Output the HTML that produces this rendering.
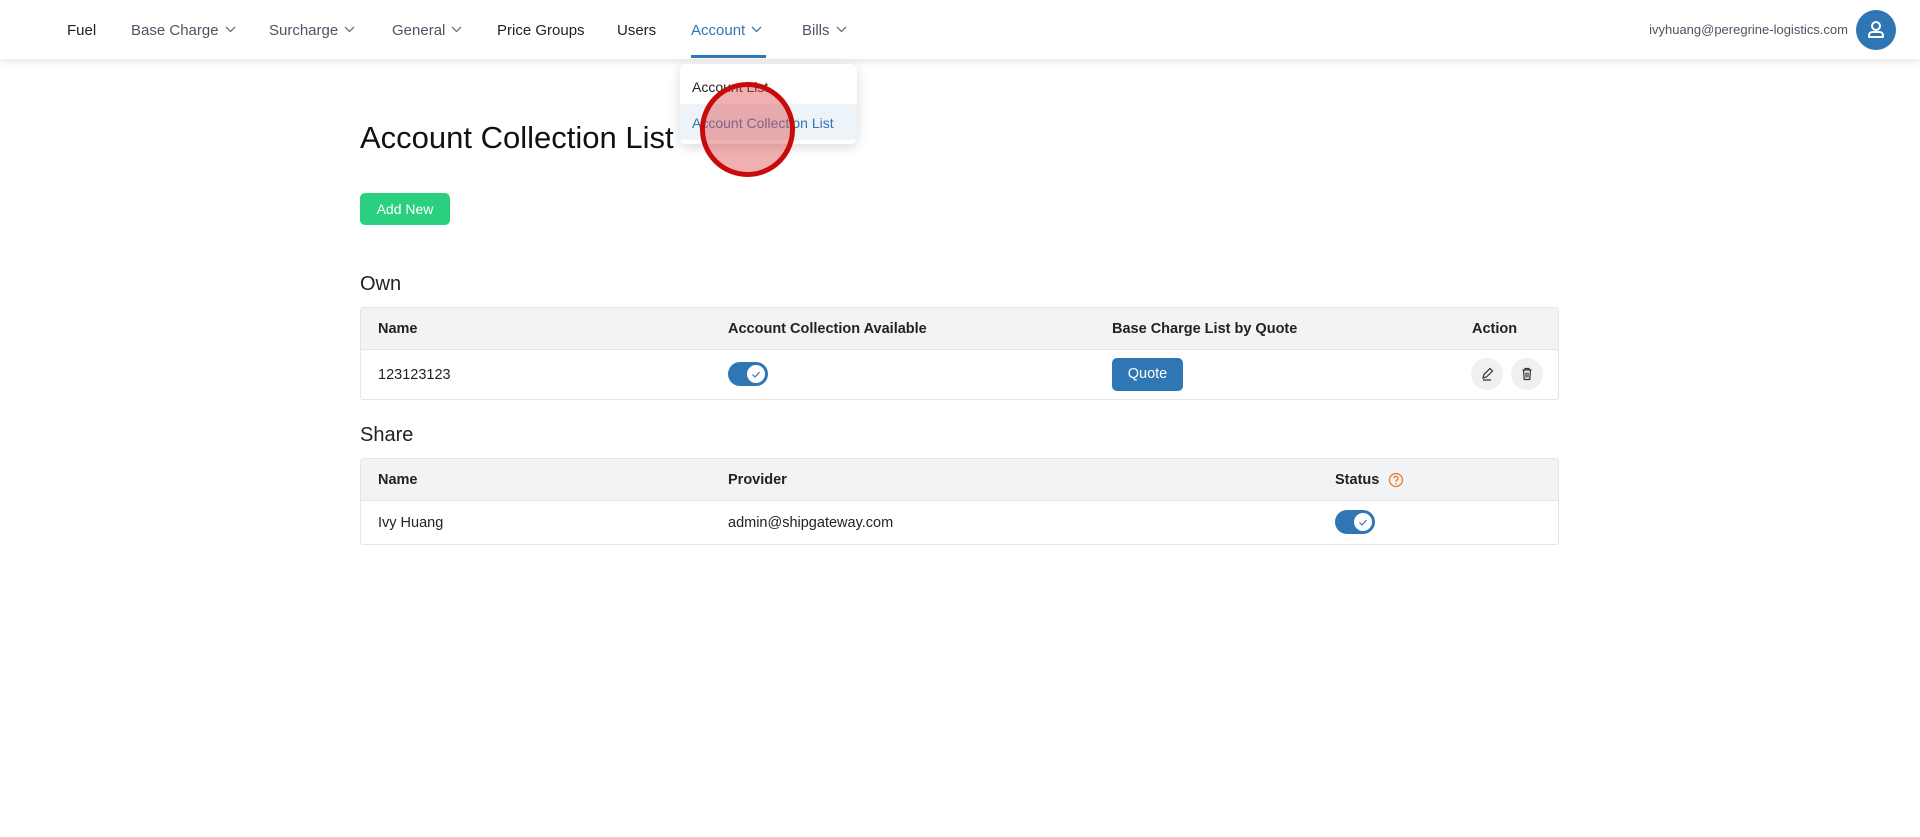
<!DOCTYPE html>
<html><head><meta charset="utf-8"><style>
*{box-sizing:border-box;margin:0;padding:0}
body{width:1920px;height:837px;background:#fff;font-family:"Liberation Sans",sans-serif;color:#1f2328;position:relative;overflow:hidden}
.nav{position:absolute;left:0;top:0;width:1920px;height:59px;background:#fff;box-shadow:0 2px 8px rgba(0,0,0,.12)}
.ni{position:absolute;top:22px;font-size:15px;color:#222}
.ni.g{color:#4b5563}
.ni svg{margin-left:6px;vertical-align:2px}
.abs{position:absolute}
.dd{position:absolute;left:680px;top:64px;width:177px;height:80px;background:#fff;border-radius:6px;box-shadow:0 3px 12px rgba(0,0,0,.15)}
.tbl{position:absolute;left:360px;width:1199px;border:1px solid #e3e5e8;border-radius:3px}
.th{background:#f2f3f5;height:42px;border-bottom:1px solid #e3e5e8;position:relative}
.th span{position:absolute;top:13px;font-weight:bold;font-size:14.5px;color:#222}
.tr{position:relative}
.tr span{position:absolute;font-size:14.5px;color:#222}
.tog{position:absolute;width:40px;height:24px;border-radius:12px;background:#2f76b5}
.tog i{position:absolute;right:3px;top:3px;width:18px;height:18px;border-radius:50%;background:#fff}
.circ{position:absolute;width:32px;height:32px;border-radius:50%;background:#eef0f2}
</style></head><body>
<div class="nav">
<div class="ni" style="left:67px">Fuel</div>
<div class="ni g" style="left:131px">Base Charge<svg width="11" height="7" viewBox="0 0 11 7"><path d="M1 1l4.5 4.5L10 1" fill="none" stroke="#6b7280" stroke-width="1.3"/></svg></div>
<div class="ni g" style="left:269px">Surcharge<svg width="11" height="7" viewBox="0 0 11 7"><path d="M1 1l4.5 4.5L10 1" fill="none" stroke="#6b7280" stroke-width="1.3"/></svg></div>
<div class="ni g" style="left:392px">General<svg width="11" height="7" viewBox="0 0 11 7"><path d="M1 1l4.5 4.5L10 1" fill="none" stroke="#6b7280" stroke-width="1.3"/></svg></div>
<div class="ni" style="left:497px">Price Groups</div>
<div class="ni" style="left:617px">Users</div>
<div class="ni" style="left:691px;color:#2f76b5">Account<svg width="11" height="7" viewBox="0 0 11 7"><path d="M1 1l4.5 4.5L10 1" fill="none" stroke="#2f76b5" stroke-width="1.3"/></svg></div>
<div class="abs" style="left:691px;top:55px;width:75px;height:3px;background:#2f76b5"></div>
<div class="ni g" style="left:802px">Bills<svg width="11" height="7" viewBox="0 0 11 7"><path d="M1 1l4.5 4.5L10 1" fill="none" stroke="#6b7280" stroke-width="1.3"/></svg></div>
<div class="abs" style="right:72px;top:22px;font-size:13px;color:#4b5563">ivyhuang@peregrine-logistics.com</div>
<div class="abs" style="left:1856px;top:10px;width:40px;height:40px;border-radius:50%;background:#2f76b5">
<svg width="40" height="40" viewBox="0 0 40 40"><circle cx="20" cy="16" r="4" fill="none" stroke="#fff" stroke-width="2"/><path d="M13 27v-1.5c0-2 1.5-3.5 3.5-3.5h7c2 0 3.5 1.5 3.5 3.5V27z" fill="none" stroke="#fff" stroke-width="2" stroke-linejoin="round"/></svg></div>
</div>
<div class="dd">
<div class="abs" style="left:12px;top:15px;font-size:14px;color:#222">Account List</div>
<div class="abs" style="left:0;top:40px;width:177px;height:36px;background:#eef3f8"></div>
<div class="abs" style="left:12px;top:51px;font-size:14px;color:#2f76b5">Account Collection List</div>
</div>
<div class="abs" style="left:700px;top:82px;width:95px;height:95px;border-radius:50%;border:5px solid #c80a0a;background:rgba(220,80,80,.45)"></div>
<div class="abs" style="left:360px;top:120px;font-size:31px;color:#111">Account Collection List</div>
<div class="abs" style="left:360px;top:193px;width:90px;height:32px;border-radius:5px;background:#2ad07e;color:#fff;font-size:14px;line-height:32px;text-align:center">Add New</div>
<div class="abs" style="left:360px;top:273px;font-size:20px;color:#222">Own</div>
<div class="tbl" style="top:307px">
<div class="th"><span style="left:17px">Name</span><span style="left:367px">Account Collection Available</span><span style="left:751px">Base Charge List by Quote</span><span style="left:1111px">Action</span></div>
<div class="tr" style="height:49px">
<span style="left:17px;top:17px">123123123</span>
<div class="tog" style="left:367px;top:12px"><i><svg width="18" height="18" viewBox="0 0 18 18"><path d="M5.5 9.5l2.5 2.5 4.5-5" fill="none" stroke="#2f76b5" stroke-width="1.2"/></svg></i></div>
<div class="abs" style="left:751px;top:8px;width:71px;height:33px;border-radius:5px;background:#2f76b5;color:#fff;font-size:14.5px;line-height:33px;text-align:center">Quote</div>
<div class="circ" style="left:1110px;top:8px"><svg width="32" height="32" viewBox="0 0 32 32"><path d="M12 20l1-3.5 6-6 2.5 2.5-6 6zM12 22h8" fill="none" stroke="#333" stroke-width="1.2"/></svg></div>
<div class="circ" style="left:1150px;top:8px"><svg width="32" height="32" viewBox="0 0 32 32"><path d="M11.5 12h9M14 12v-1.5h4V12M12.5 12l.7 9.5h5.6l.7-9.5M15 14.5v5M17 14.5v5" fill="none" stroke="#333" stroke-width="1.2"/></svg></div>
</div></div>
<div class="abs" style="left:360px;top:424px;font-size:20px;color:#222">Share</div>
<div class="tbl" style="top:458px">
<div class="th"><span style="left:17px">Name</span><span style="left:367px">Provider</span><span style="left:974px">Status</span>
<svg class="abs" style="left:1027px;top:13px" width="16" height="16" viewBox="0 0 16 16"><circle cx="8" cy="8" r="6.5" fill="none" stroke="#e8772e" stroke-width="1.3"/><path d="M6 6.3a2 2 0 1 1 2.6 1.9c-.4.2-.6.5-.6.9v.7" fill="none" stroke="#e8772e" stroke-width="1.3"/><circle cx="8" cy="11.5" r=".8" fill="#e8772e"/></svg></div>
<div class="tr" style="height:43px">
<span style="left:17px;top:14px">Ivy Huang</span>
<span style="left:367px;top:14px">admin@shipgateway.com</span>
<div class="tog" style="left:974px;top:9px"><i><svg width="18" height="18" viewBox="0 0 18 18"><path d="M5.5 9.5l2.5 2.5 4.5-5" fill="none" stroke="#2f76b5" stroke-width="1.2"/></svg></i></div>
</div></div>
</body></html>
